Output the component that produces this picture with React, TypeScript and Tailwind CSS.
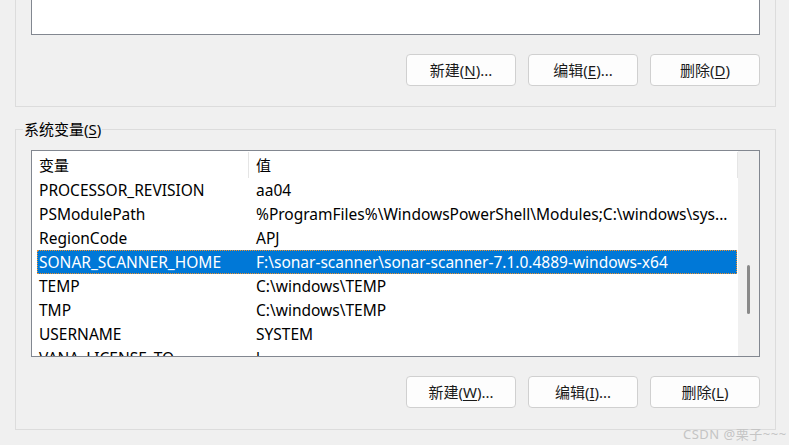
import React from "react";

const rows = [
  { name: "PROCESSOR_REVISION", value: "aa04" },
  { name: "PSModulePath", value: "%ProgramFiles%\\WindowsPowerShell\\Modules;C:\\windows\\sys..." },
  { name: "RegionCode", value: "APJ" },
  { name: "SONAR_SCANNER_HOME", value: "F:\\sonar-scanner\\sonar-scanner-7.1.0.4889-windows-x64", selected: true },
  { name: "TEMP", value: "C:\\windows\\TEMP" },
  { name: "TMP", value: "C:\\windows\\TEMP" },
  { name: "USERNAME", value: "SYSTEM" },
  { name: "VANA_LICENSE_TO", value: "l" },
];

function WinButton({ label, hotkey, dots }: { label: string; hotkey: string; dots?: boolean }) {
  return (
    <button className="w-[110px] h-[32px] rounded-[4px] border border-[#d0d0d0] bg-[#fdfdfd] text-[15px] text-[#1a1a1a] flex items-center justify-center">
      <span>
        {label}(<span className="underline underline-offset-2">{hotkey}</span>){dots ? "..." : ""}
      </span>
    </button>
  );
}

export default function App() {
  return (
    <div className="relative w-[789px] h-[445px] overflow-hidden bg-[#f0f0f0] font-['Noto_Sans','Noto_Sans_CJK_SC',sans-serif] text-[15px] text-black">
      {/* User variables group (top cut off) */}
      <div className="ml-[15px] w-[761px] border-x border-b border-[#dcdcdc] pb-[20px]">
        <div className="mx-[15px] h-[35px] border-x border-b border-[#828790] bg-white" />
        <div className="mt-[19px] pr-[15px] flex justify-end gap-[12px]">
          <WinButton label="新建" hotkey="N" dots />
          <WinButton label="编辑" hotkey="E" dots />
          <WinButton label="删除" hotkey="D" />
        </div>
      </div>

      {/* System variables group */}
      <div className="relative mt-[22px] ml-[15px] w-[761px] border border-[#dcdcdc] pt-[20px] pb-[21px]">
        <span className="absolute left-[7px] top-[-12px] px-[1px] bg-[#f0f0f0] leading-[22px]">
          系统变量(<span className="underline underline-offset-2">S</span>)
        </span>

        <div className="mx-[15px] h-[207px] border border-[#828790] bg-white flex overflow-hidden">
          <div className="flex-1 overflow-hidden">
            {/* header */}
            <div className="h-[27px] flex items-stretch">
              <div className="w-[217px] pl-[7px] flex items-center border-r border-[#e5e5e5] mt-[1px]">变量</div>
              <div className="flex-1 pl-[7px] flex items-center border-r border-[#e5e5e5] mt-[1px]">值</div>
            </div>
            {rows.map((r) => (
              <div key={r.name} className="pl-[5px] pr-[1px] text-[15.5px]">
                <div
                  className={`h-[24px] flex leading-[24px] whitespace-nowrap ${
                    r.selected ? "bg-[#0078d7] text-white outline-1 outline-dotted outline-[#f0902a] -outline-offset-1" : ""
                  }`}
                >
                  <div className="w-[212px] pl-[2px]">{r.name}</div>
                  <div className="flex-1 pl-[7px] overflow-hidden">{r.value}</div>
                </div>
              </div>
            ))}
          </div>
          {/* scrollbar */}
          <div className="w-[21px] bg-[#f0f0f0] pt-[114px] flex justify-center">
            <div className="w-[3px] h-[49px] rounded-full bg-[#8a8a8a]" />
          </div>
        </div>

        <div className="mt-[19px] pr-[15px] flex justify-end gap-[12px]">
          <WinButton label="新建" hotkey="W" dots />
          <WinButton label="编辑" hotkey="I" dots />
          <WinButton label="删除" hotkey="L" />
        </div>
      </div>

      <span className="absolute left-[683px] top-[425px] text-[13px] text-[#c4c4c4] tracking-[0.5px]">CSDN @栗子~~~</span>
    </div>
  );
}
